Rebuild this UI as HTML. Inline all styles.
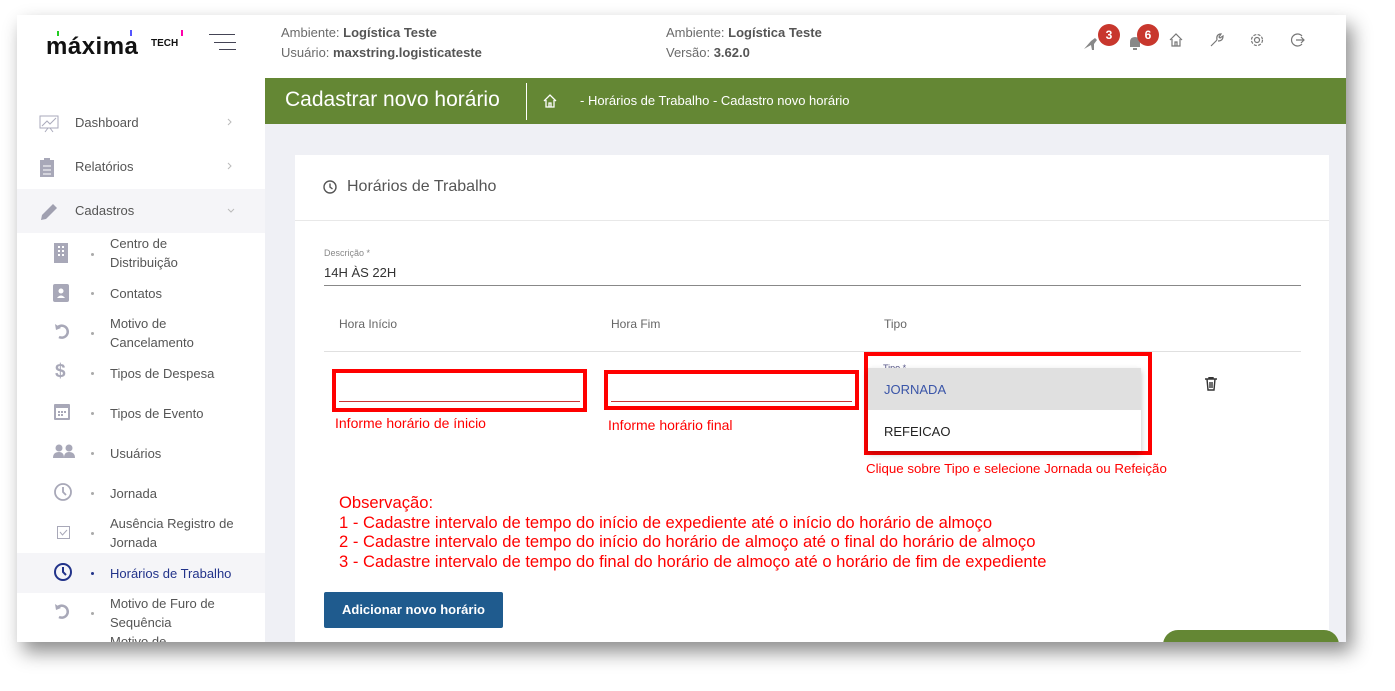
<!DOCTYPE html>
<html><head><meta charset="utf-8"><style>
*{margin:0;padding:0;box-sizing:border-box}
body{width:1395px;height:691px;background:#fff;font-family:"Liberation Sans",sans-serif;position:relative;overflow:hidden}
.frame{position:absolute;left:17px;top:15px;width:1329px;height:627px;background:#eff0f5;overflow:hidden;box-shadow:6px 10px 18px rgba(0,0,0,.45)}
.a{position:absolute}
.hdr{left:0;top:0;width:1329px;height:63px;background:#fff}
.side{left:0;top:63px;width:248px;height:564px;background:#fff}
.g{color:#6a6a6a;font-size:13px}
.si{color:#555;font-size:13px;line-height:19px}
.dot{width:3px;height:3px;border-radius:50%;background:#aaa}
.red{color:#f00;font-size:14px}
.rb{border:4px solid #f00}
</style></head><body>
<div class="frame">
<div class="a hdr">
 <div class="a" style="left:29px;top:18px;font-size:24px;font-weight:bold;color:#111;letter-spacing:0.5px">máxima</div>
 <div class="a" style="left:134px;top:23px;font-size:10px;font-weight:bold;color:#111">TECH</div>
 <div class="a" style="left:40px;top:16px;width:2px;height:5px;background:#2c2"></div>
 <div class="a" style="left:113px;top:15px;width:2px;height:6px;background:#55f"></div>
 <div class="a" style="left:164px;top:15px;width:2px;height:6px;background:#f0a"></div>
 <div class="a" style="left:192px;top:19px;width:26px;height:1px;background:#445"></div>
 <div class="a" style="left:197px;top:27px;width:22px;height:1px;background:#445"></div>
 <div class="a" style="left:202px;top:34px;width:17px;height:1px;background:#445"></div>
 <div class="a g" style="left:264px;top:10px">Ambiente: <b style="color:#555">Logística Teste</b></div>
 <div class="a g" style="left:264px;top:30px">Usuário: <b style="color:#555">maxstring.logisticateste</b></div>
 <div class="a g" style="left:649px;top:10px">Ambiente: <b style="color:#555">Logística Teste</b></div>
 <div class="a g" style="left:649px;top:30px">Versão: <b style="color:#555">3.62.0</b></div>
 <svg class="a" style="left:1066px;top:20px" width="20" height="16"><path d="M1 14 L8 6 L12 3 L14 5 L11 9 L11 15 L9 15 L8 10 Z" fill="#888"/></svg>
 <div class="a" style="left:1081px;top:9px;width:22px;height:22px;border-radius:50%;background:#c8372d;color:#fff;font-size:12px;font-weight:bold;text-align:center;line-height:22px">3</div>
 <svg class="a" style="left:1110px;top:20px" width="16" height="16"><path d="M3 12 L3 7 Q3 2 8 2 Q13 2 13 7 L13 12 Z M6 13 L10 13 L10 15 L6 15Z" fill="#888"/></svg>
 <div class="a" style="left:1120px;top:9px;width:22px;height:22px;border-radius:50%;background:#c8372d;color:#fff;font-size:12px;font-weight:bold;text-align:center;line-height:22px">6</div>
 <svg class="a" style="left:1151px;top:17px" width="16" height="16" fill="none" stroke="#777" stroke-width="1.2"><path d="M2 8 L8 2 L14 8 M4 7 L4 14 L12 14 L12 7 M7 14 L7 10 L9 10 L9 14"/></svg>
 <svg class="a" style="left:1192px;top:17px" width="16" height="16" fill="none" stroke="#777" stroke-width="1.2"><path d="M2 14 L8 8 M8 8 Q7 3 11 2 L12 2 L10 5 L11 6 L14 4 Q14 9 9 9"/></svg>
 <svg class="a" style="left:1232px;top:17px" width="16" height="16" fill="none" stroke="#777" stroke-width="1.2"><circle cx="8" cy="8" r="2.5"/><circle cx="8" cy="8" r="5.5" stroke-dasharray="3 1.4"/></svg>
 <svg class="a" style="left:1273px;top:17px" width="16" height="16" fill="none" stroke="#777" stroke-width="1.2"><path d="M12 4 A6 6 0 1 0 12 12 M6 8 L14 8 M11 5 L14 8 L11 11"/></svg>
</div>
<div class="a side">
 <svg class="a" style="left:22px;top:37px" width="20" height="18" fill="none" stroke="#aab" stroke-width="1"><rect x="1" y="1" width="18" height="12"/><path d="M3 11 L8 6 L11 9 L17 3 M6 17 L9 13 M14 17 L11 13"/></svg>
 <div class="a" style="left:58px;top:37px;font-size:13px;color:#555">Dashboard</div>
 <svg class="a" style="left:210px;top:40px" width="6" height="8" fill="none" stroke="#bbb"><path d="M1 1 L4 4 L1 7"/></svg>
 <svg class="a" style="left:22px;top:79px" width="16" height="20"><rect x="1" y="3" width="14" height="17" fill="#a8a8b8"/><rect x="5" y="1" width="6" height="4" fill="#a8a8b8"/><path d="M4 9h8M4 13h8M4 17h8" stroke="#fff"/></svg>
 <div class="a" style="left:58px;top:81px;font-size:13px;color:#555">Relatórios</div>
 <svg class="a" style="left:210px;top:84px" width="6" height="8" fill="none" stroke="#bbb"><path d="M1 1 L4 4 L1 7"/></svg>
 <div class="a" style="left:0;top:111px;width:248px;height:44px;background:#f5f5f8"></div>
 <svg class="a" style="left:22px;top:124px" width="20" height="20"><path d="M2 18 L3 13 L14 2 L18 6 L7 17 Z" fill="#a0a0b0"/></svg>
 <div class="a" style="left:58px;top:125px;font-size:13px;color:#555">Cadastros</div>
 <svg class="a" style="left:210px;top:130px" width="8" height="6" fill="none" stroke="#bbb"><path d="M1 1 L4 4 L7 1"/></svg>
 <svg class="a" style="left:37px;top:165px" width="14" height="20"><rect x="0" y="0" width="14" height="20" fill="#a8a8b8"/><path d="M4 3h2v2H4zM8 3h2v2H8zM4 7h2v2H4zM8 7h2v2H8zM4 11h2v2H4zM8 11h2v2H8z" fill="#fff"/></svg>
 <div class="a dot" style="left:74px;top:175px"></div>
 <div class="a si" style="left:93px;top:156px">Centro de<br>Distribuição</div>
 <svg class="a" style="left:36px;top:206px" width="17" height="18"><rect x="0" y="0" width="16" height="18" rx="2" fill="#a8a8b8"/><circle cx="8" cy="7" r="2.5" fill="#fff"/><path d="M4 14 Q8 9 12 14Z" fill="#fff"/></svg>
 <div class="a dot" style="left:74px;top:214px"></div>
 <div class="a si" style="left:93px;top:206px">Contatos</div>
 <svg class="a" style="left:36px;top:244px" width="18" height="18" fill="none" stroke="#a8a8b8" stroke-width="2.5"><path d="M4 6 A6 6 0 1 1 6 15"/><path d="M2 2 L3 8 L8 6" fill="#a8a8b8" stroke="none"/></svg>
 <div class="a dot" style="left:74px;top:254px"></div>
 <div class="a si" style="left:93px;top:236px">Motivo de<br>Cancelamento</div>
 <div class="a" style="left:38px;top:283px;font-size:19px;font-weight:bold;color:#a8a8b8">$</div>
 <div class="a dot" style="left:74px;top:294px"></div>
 <div class="a si" style="left:93px;top:286px">Tipos de Despesa</div>
 <svg class="a" style="left:37px;top:324px" width="16" height="18"><rect x="0" y="2" width="16" height="16" rx="1" fill="#a8a8b8"/><rect x="2" y="6" width="12" height="10" fill="#fff"/><path d="M4 9h2v2H4zM7 9h2v2H7zM10 9h2v2h-2zM4 12h2v2H4zM7 12h2v2H7z" fill="#a8a8b8"/></svg>
 <div class="a dot" style="left:74px;top:334px"></div>
 <div class="a si" style="left:93px;top:326px">Tipos de Evento</div>
 <svg class="a" style="left:36px;top:366px" width="24" height="14" fill="#a8a8b8"><circle cx="6" cy="4" r="3.5"/><circle cx="16" cy="4" r="3.5"/><path d="M0 14 Q0 8 6 8 Q11 8 11 14Z M11 14 Q11 8 16 8 Q22 8 22 14Z"/></svg>
 <div class="a dot" style="left:74px;top:374px"></div>
 <div class="a si" style="left:93px;top:366px">Usuários</div>
 <svg class="a" style="left:36px;top:404px" width="20" height="20" fill="none" stroke="#a8a8b8" stroke-width="1.8"><circle cx="10" cy="10" r="8"/><path d="M10 5 L10 10 L13 13"/></svg>
 <div class="a dot" style="left:74px;top:414px"></div>
 <div class="a si" style="left:93px;top:406px">Jornada</div>
 <svg class="a" style="left:40px;top:448px" width="13" height="13" fill="none" stroke="#a8a8b8"><rect x="0.5" y="0.5" width="12" height="12"/><path d="M3 6 L5.5 9 L10 4"/></svg>
 <div class="a dot" style="left:74px;top:454px"></div>
 <div class="a si" style="left:93px;top:436px">Ausência Registro de<br>Jornada</div>
 <div class="a" style="left:0;top:475px;width:248px;height:40px;background:#f5f5f8"></div>
 <svg class="a" style="left:36px;top:484px" width="20" height="20" fill="none" stroke="#22338a" stroke-width="2"><circle cx="10" cy="10" r="8"/><path d="M10 5 L10 10 L13 13"/></svg>
 <div class="a dot" style="left:74px;top:494px;background:#22338a"></div>
 <div class="a si" style="left:93px;top:486px;color:#22338a">Horários de Trabalho</div>
 <svg class="a" style="left:36px;top:524px" width="18" height="18" fill="none" stroke="#a8a8b8" stroke-width="2.5"><path d="M4 6 A6 6 0 1 1 6 15"/><path d="M2 2 L3 8 L8 6" fill="#a8a8b8" stroke="none"/></svg>
 <div class="a dot" style="left:74px;top:534px"></div>
 <div class="a si" style="left:93px;top:516px">Motivo de Furo de<br>Sequência<br>Motivo de</div>
</div>
<div class="a" style="left:248px;top:63px;width:1081px;height:46px;background:#648734"></div>
<div class="a" style="left:268px;top:73px;font-size:21px;color:#fff">Cadastrar novo horário</div>
<div class="a" style="left:509px;top:68px;width:1px;height:37px;background:#fff"></div>
<svg class="a" style="left:526px;top:79px" width="14" height="14" fill="none" stroke="#fff" stroke-width="1.3"><path d="M1 7 L7 1 L13 7 M3 6 L3 13 L11 13 L11 6 M6 13 L6 9 L8 9 L8 13"/></svg>
<div class="a" style="left:563px;top:78px;font-size:13px;color:#fff">- Horários de Trabalho - Cadastro novo horário</div>
<div class="a" style="left:278px;top:140px;width:1034px;height:500px;background:#fff"></div>
<svg class="a" style="left:306px;top:165px" width="14" height="14" fill="none" stroke="#555" stroke-width="1.4"><circle cx="7" cy="7" r="6"/><path d="M7 3.5 L7 7 L9.5 9"/></svg>
<div class="a" style="left:330px;top:163px;font-size:16px;color:#555">Horários de Trabalho</div>
<div class="a" style="left:278px;top:205px;width:1034px;height:1px;background:#e8e8e8"></div>
<div class="a" style="left:307px;top:233px;font-size:9px;color:#888">Descrição *</div>
<div class="a" style="left:307px;top:250px;font-size:13px;color:#333">14H ÀS 22H</div>
<div class="a" style="left:307px;top:270px;width:977px;height:1px;background:#888"></div>
<div class="a" style="left:322px;top:302px;font-size:12px;color:#666">Hora Início</div>
<div class="a" style="left:594px;top:302px;font-size:12px;color:#666">Hora Fim</div>
<div class="a" style="left:867px;top:302px;font-size:12px;color:#666">Tipo</div>
<div class="a" style="left:307px;top:336px;width:977px;height:1px;background:#e0e0e0"></div>
<div class="a rb" style="left:315px;top:354px;width:255px;height:43px"></div>
<div class="a" style="left:322px;top:386px;width:241px;height:1px;background:#c33"></div>
<div class="a red" style="left:318px;top:400px">Informe horário de ínicio</div>
<div class="a rb" style="left:587px;top:355px;width:255px;height:40px"></div>
<div class="a" style="left:594px;top:386px;width:241px;height:1px;background:#c33"></div>
<div class="a red" style="left:591px;top:402px">Informe horário final</div>
<div class="a rb" style="left:847px;top:337px;width:288px;height:103px"></div>
<div class="a" style="left:866px;top:348px;font-size:9px;color:#558">Tipo *</div>
<div class="a" style="left:851px;top:353px;width:273px;height:83px;background:#fff;box-shadow:0 3px 6px rgba(0,0,0,.25)"></div>
<div class="a" style="left:851px;top:353px;width:273px;height:42px;background:#e0e0e0"></div>
<div class="a" style="left:867px;top:367px;font-size:13px;color:#3a55a8">JORNADA</div>
<div class="a" style="left:867px;top:409px;font-size:13px;color:#222">REFEICAO</div>
<svg class="a" style="left:1188px;top:362px" width="12" height="14" fill="none" stroke="#333" stroke-width="1.4"><path d="M0 2h12M4 2V0.7h4V2M2 2l1 11h6l1-11M5 5v6M7 5v6"/></svg>
<div class="a red" style="left:849px;top:446px;font-size:13.3px">Clique sobre Tipo e selecione Jornada ou Refeição</div>
<div class="a red" style="left:322px;top:478px;font-size:16.6px;line-height:19.5px">Observação:<br>1 - Cadastre intervalo de tempo do início de expediente até o início do horário de almoço<br>2 - Cadastre intervalo de tempo do início do horário de almoço até o final do horário de almoço<br>3 - Cadastre intervalo de tempo do final do horário de almoço até o horário de fim de expediente</div>
<div class="a" style="left:307px;top:577px;width:179px;height:36px;background:#1f5b8e;border-radius:2px;color:#fff;font-size:13px;font-weight:bold;text-align:center;line-height:36px">Adicionar novo horário</div>
<div class="a" style="left:1146px;top:615px;width:176px;height:30px;background:#648734;border-radius:15px"></div>
</div>
</body></html>
